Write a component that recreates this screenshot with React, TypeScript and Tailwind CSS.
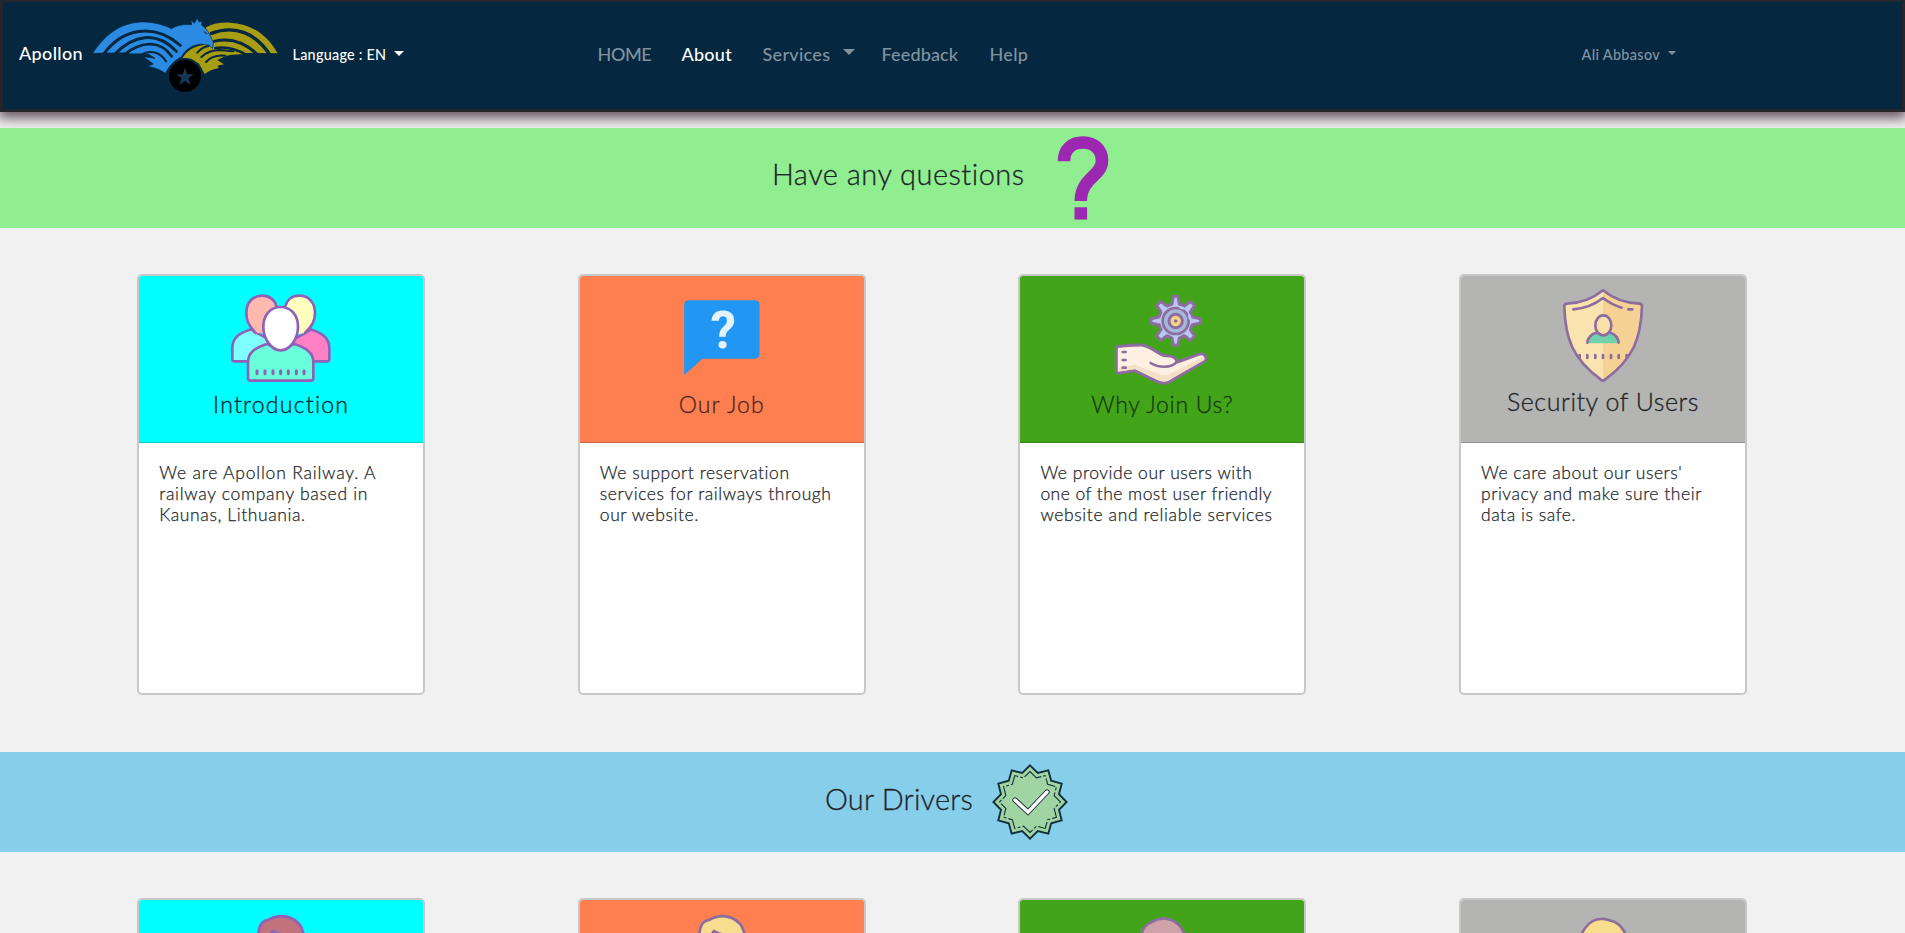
import React from 'react';

function Caret({ className }: { className: string }) {
  return <span className={`inline-block border-x-transparent border-b-0 ${className}`} />;
}

function Logo() {
  return (
    <svg className="block h-[82px] w-[190px]" viewBox="273 42 570 246">
      <path fill="#a79d12" d="M618 82C640 70 665 67 690 68C752 70 802 104 833 160L640 158C680 150 712 155 732 163C712 162 690 164 672 170L652 180L672 193L652 197L657 204C640 207 625 213 614 222L596 190L546 178C556 156 580 138 610 136Z" />
      <g fill="none" stroke="#05273f" strokeLinecap="round">
        <path strokeWidth="10" d="M812 168C768 98 704 74 634 100" />
        <path strokeWidth="9" d="M776 167C735 126 690 112 642 124" />
        <path strokeWidth="8" d="M742 166C712 148 682 138 646 144" />
        <path strokeWidth="6" d="M592 158C600 148 612 140 626 138M604 171C620 156 638 150 660 150L700 154M618 186C632 170 650 164 676 167" />
      </g>
      <path fill="#2b8be3" stroke="#05273f" strokeWidth="2" d="M278 160C320 96 370 66 430 66C468 66 498 78 515 86C530 75 555 72 575 74L573 60L583 70L592 54L597 66L606 64L605 76C616 82 623 92 629 104L640 126L638 146L628 136C598 126 560 138 545 170C525 180 508 196 496 220C478 208 462 202 442 199L460 192L430 170L465 175L445 162L382 161L388 158Z" />
      <g fill="none" stroke="#05273f" strokeLinecap="round">
        <path strokeWidth="9" d="M310 164C365 86 460 66 541 136" />
        <path strokeWidth="9" d="M343 164C400 104 470 92 529 154" />
        <path strokeWidth="8" d="M374 163C425 122 482 120 515 169" />
        <path strokeWidth="6" d="M425 163C455 148 482 158 498 184" />
        <path strokeWidth="3" d="M612 96l9 5" />
      </g>
      <circle cx="555" cy="228" r="54" fill="#05273f" />
      <circle cx="555" cy="228" r="48" fill="#000" />
      <path fill="#163656" d="M555 204l6.500 19h20l-16 12 6 20-16.500-12-16.500 12 6-20-16-12h20z" />
    </svg>
  );
}

function QuestionIcon() {
  return (
    <svg className="block h-[100px] w-[60px]" viewBox="0 0 60 100" fill="none" stroke="#9c27b0">
      <path strokeWidth="12.600" d="M11 33.300C11 21 19 14.500 30 14.500C41 14.500 49 21.500 49 33C49 48 27.800 50 27.800 73" />
      <path strokeWidth="12.300" d="M21.500 85.400h12.600" />
    </svg>
  );
}

function badgePoints(outer: number, inner: number) {
  return Array.from({ length: 24 }, (_, i) => {
    const r = i % 2 ? inner : outer;
    const a = (i * Math.PI) / 12 - Math.PI / 2;
    return `${(38 + r * Math.cos(a)).toFixed(2)},${(38 + r * Math.sin(a)).toFixed(2)}`;
  }).join(' ');
}

function BadgeIcon() {
  return (
    <svg className="block size-[76px]" viewBox="0 0 76 76" fill="none" strokeLinejoin="miter">
      <polygon points={badgePoints(36.6, 30)} fill="#a0d4a3" stroke="#12303b" strokeWidth="1.900" />
      <polygon points={badgePoints(30.5, 25)} stroke="#12303b" strokeWidth="1.100" strokeDasharray="14 2 3 2" />
      <path d="M23 36l13 12l19-20" stroke="#12303b" strokeWidth="5.200" strokeLinecap="round" />
      <path d="M23 36l13 12l19-20" stroke="#fff" strokeWidth="3.400" strokeLinecap="round" />
    </svg>
  );
}

const iconBox = 'block h-[110px] w-[100px] shrink-0';

function PeopleIcon() {
  return (
    <svg className={iconBox} viewBox="304 33 300 330" stroke="#9160b8" strokeWidth="8" strokeLinejoin="round" strokeLinecap="round">
      <path fill="#80ffff" d="M365 193C325 205 308 220 308 250V283Q308 289 314 289H400L430 230L375 200Z" />
      <path fill="#ff80c5" d="M542 193C580 205 599 220 599 250V283Q599 289 593 289H510L480 230L525 205Z" />
      <path fill="#ffb9ae" stroke="none" d="M378 204C355 180 350 165 350 143C350 112 370 92 398 92C420 92 436 105 442 125L405 205Z" />
      <path fill="none" d="M378 204C355 180 350 165 350 143C350 112 370 92 398 92C420 92 436 105 440 123" />
      <path fill="#ffffbf" stroke="none" d="M526 204C550 180 556 165 556 143C556 112 536 92 509 92C487 92 470 105 466 125L505 207Z" />
      <path fill="none" d="M526 204C550 180 556 165 556 143C556 112 536 92 509 92C487 92 472 105 467 123" />
      <path fill="#69ffdb" d="M412 237C375 249 355 262 355 292V339Q355 347 363 347H544Q551 347 551 339V292C551 262 530 249 494 237L453 255Z" />
      <path fill="#fff" d="M453 126C483 126 505 150 505 185C505 220 482 256 453 256C424 256 401 220 401 185C401 150 423 126 453 126Z" />
      <path strokeWidth="9" d="M382 317v9M406 317v9M430 317v9M453 317v9M476 317v9M500 317v9M523 317v9" />
    </svg>
  );
}

function ChatIcon() {
  return (
    <svg className={iconBox} viewBox="306.5 33 300 330">
      <path fill="#2196f3" d="M357 106H555Q569 106 569 120V267Q569 281 555 281H398L343 330V120Q343 106 357 106Z" />
      <text x="460" y="249" textAnchor="middle" fill="#e3f2fd" fontFamily="Roboto, sans-serif" fontWeight="700" fontSize="154">?</text>
    </svg>
  );
}

function HandGearIcon() {
  return (
    <svg className={iconBox} viewBox="307 33 300 330" strokeLinejoin="round" strokeLinecap="round">
      <g stroke="#8d6c9f" strokeWidth="9">
        <path fill="#b9c8ef" d="M491 94H505L509 117L524 123L543 109L555 121L542 141L548 156L573 161V175L548 179L542 194L555 213L543 226L524 212L509 219L505 241H491L487 219L472 212L453 226L441 213L454 194L448 179L424 175V161L448 156L454 141L441 121L453 109L472 123L487 117Z" />
        <circle cx="498" cy="168" r="39" fill="#a5b8dc" strokeWidth="8" />
        <circle cx="498" cy="168" r="20" fill="#fad383" strokeWidth="9" />
        <path fill="none" stroke="#b9c8ef" strokeWidth="8" d="M512 127l7 3M539 152l2 8" />
        <circle cx="498" cy="168" r="3" fill="#8d6c9f" strokeWidth="5" />
        <path fill="#fdf0e2" d="M320 251Q320 245 327 244C350 242 375 239 397 240C430 246 445 270 466 272C486 271 500 276 503 291L567 268C584 262 597 280 582 290L490 344C475 356 460 358 443 350L375 317L327 324Q320 324 320 318Z" />
      </g>
      <path fill="#f4dfc7" d="M326 309L376 299L447 327C460 332 475 330 487 323L578 277C590 280 585 285 578 289L489 339C475 350 462 352 446 345L376 312L326 320Z" />
      <path fill="none" stroke="#8d6c9f" strokeWidth="8" d="M423 294C443 307 485 313 503 288M339 261h9M339 285h9M339 308h9" />
    </svg>
  );
}

function ShieldIcon() {
  return (
    <svg className={iconBox} viewBox="309 33 300 330" strokeLinejoin="round" strokeLinecap="round">
      <path fill="#f9e3ae" d="M459 76C425 105 385 115 343 117C340 215 362 280 459 347Z" />
      <path fill="#f5d294" d="M459 76C493 105 533 115 576 117C578 215 556 280 459 347Z" />
      <path fill="#70d1ac" d="M413 235C416 215 428 205 442 204L476 204C492 205 503 217 506 235Z" />
      <g fill="none" stroke="#8d6c9f" strokeWidth="8">
        <path d="M459 76C425 104 387 115 350 116Q343 117 343 124C345 220 368 282 453 344Q459 349 465 344C550 282 573 220 576 124Q576 117 569 116C532 115 493 104 459 76Z" />
        <path d="M370 133C405 130 435 118 459 99C477 113 495 122 515 128M535 133h12" />
        <path d="M412 233C414 215 424 207 439 203M506 233C504 215 494 207 480 203" />
        <ellipse cx="460" cy="181" rx="24" ry="30" fill="#f9dfa8" />
        <path d="M389 270v9M412 270v9M436 270v9M459 270v9M483 270v9M506 270v9M530 270v9" />
      </g>
    </svg>
  );
}

function Hair({ fill, stroke, d, lock }: { fill: string; stroke: string; d: string; lock?: string }) {
  return (
    <svg className={iconBox} viewBox="0 0 100 110" stroke={stroke} strokeWidth="2.700" strokeLinecap="round" strokeLinejoin="round">
      <path fill={fill} d={d} />
      {lock && <path fill="#fff" d={lock} />}
    </svg>
  );
}

const hairShort = 'M29 48C25 30 29 21 37 20C52 12 70 17 73 36L74 50';
const hairLock = 'M37 48C37 38 39 35 42 31C48 35 60 36 67 36V50';
const hairLong = 'M29 48C27 33 32 25 40 22C53 14 68 20 73 36L74 50';
const hairRound = 'M25 50C26 32 36 19 48 19C53 18 56 21 59 21C69 24 75 35 76 50';

type CardProps = {
  header: string;
  icon: React.ReactNode;
  title?: string;
  titleClass?: string;
  lines?: { text: string; cls: string }[];
};

function Card({ header, icon, title, titleClass, lines = [] }: CardProps) {
  return (
    <article className="h-[421px] w-72 overflow-hidden rounded-[5px] border-2 border-[#c8c8c8] bg-white">
      <div className={`flex h-[167px] flex-col items-center border-b border-black/20 ${header}`}>
        {icon}
        {title && <h2 className={`font-light whitespace-nowrap [-webkit-text-stroke:0.3px] ${titleClass}`}>{title}</h2>}
      </div>
      <div className="pt-[19px] pl-5 text-[17.500px] leading-[21px] font-light text-[#212529] [-webkit-text-stroke:0.25px]">
        {lines.map((l) => (
          <p key={l.text} className={`whitespace-nowrap ${l.cls}`}>
            {l.text}
          </p>
        ))}
      </div>
    </article>
  );
}

const topCards: CardProps[] = [
  {
    header: 'bg-[#00ffff]',
    icon: <PeopleIcon />,
    title: 'Introduction',
    titleClass: 'mt-[2px] text-[23px] leading-8 text-[#04202b] tracking-[1.250px]',
    lines: [
      { text: 'We are Apollon Railway. A', cls: 'tracking-[0.800px]' },
      { text: 'railway company based in', cls: 'tracking-[0.700px]' },
      { text: 'Kaunas, Lithuania.', cls: 'tracking-[0.600px]' },
    ],
  },
  {
    header: 'bg-[#ff7f50]',
    icon: <ChatIcon />,
    title: 'Our Job',
    titleClass: 'mt-[2px] text-[23px] leading-8 text-[#4b2a20] tracking-[1.100px]',
    lines: [
      { text: 'We support reservation', cls: 'tracking-[0.550px]' },
      { text: 'services for railways through', cls: 'tracking-[0.590px]' },
      { text: 'our website.', cls: 'tracking-[0.580px]' },
    ],
  },
  {
    header: 'bg-[#42a418]',
    icon: <HandGearIcon />,
    title: 'Why Join Us?',
    titleClass: 'mt-[2px] text-[23px] leading-8 text-[#193a10] tracking-[0.700px]',
    lines: [
      { text: 'We provide our users with', cls: 'tracking-[0.530px]' },
      { text: 'one of the most user friendly', cls: 'tracking-[0.450px]' },
      { text: 'website and reliable services', cls: 'tracking-[0.620px]' },
    ],
  },
  {
    header: 'bg-[#b4b4b2]',
    icon: <ShieldIcon />,
    title: 'Security of Users',
    titleClass: '-mt-[1px] text-[25px] leading-8 text-[#212529] tracking-[0.550px]',
    lines: [
      { text: "We care about our users'", cls: 'tracking-[0.530px]' },
      { text: 'privacy and make sure their', cls: 'tracking-[0.540px]' },
      { text: 'data is safe.', cls: 'tracking-[0.560px]' },
    ],
  },
];

const driverCards: CardProps[] = [
  { header: 'bg-[#00ffff]', icon: <Hair fill="#c0737c" stroke="#9160b8" d={hairShort} lock={hairLock} /> },
  { header: 'bg-[#ff7f50]', icon: <Hair fill="#f9dd8f" stroke="#8d6c9f" d={hairShort} lock={hairLock} /> },
  { header: 'bg-[#42a418]', icon: <Hair fill="#cfa2a7" stroke="#8d6c9f" d={hairLong} /> },
  { header: 'bg-[#b4b4b2]', icon: <Hair fill="#f9dd8f" stroke="#8d6c9f" d={hairRound} /> },
];

function CardRow({ cards }: { cards: CardProps[] }) {
  return (
    <div className="flex gap-[152.600px] pt-[46px] pl-[137.200px]">
      {cards.map((c, i) => (
        <Card key={i} {...c} />
      ))}
    </div>
  );
}

export default function App() {
  return (
    <div className="h-[933px] overflow-hidden bg-[#f1f1f1] font-['Lato','Open_Sans',sans-serif]">
      <nav className="relative flex h-28 items-start border-[3px] border-t-2 border-[#23272c] bg-[#05273f] text-[18px] font-medium whitespace-nowrap text-[#8293a0] shadow-[0_4px_12px_2px_rgba(50,30,42,0.75)]">
        <span className="mt-[37px] ml-4 w-[72px] leading-7 tracking-[0.350px] text-white">Apollon</span>
        <div className="mt-[12px]">
          <Logo />
        </div>
        <button className="mt-[41px] ml-[11.500px] flex w-[305px] items-center text-[14.400px] leading-6 tracking-[0.250px] text-white">
          <span className="w-[101px] text-left">Language : EN</span>
          <Caret className="-mt-[3px] border-x-[5px] border-t-[5px]" />
        </button>
        <div className="mt-[38px] flex leading-7">
          <a className="w-[84px] tracking-[-0.400px]">HOME</a>
          <a className="w-[81px] tracking-[0.250px] text-white">About</a>
          <a className="flex w-[119px] items-center">
            <span className="w-[80px] tracking-[0.300px]">Services</span>
            <Caret className="-mt-[4px] border-x-[6px] border-t-[6px]" />
          </a>
          <a className="w-[108px] tracking-[0.150px]">Feedback</a>
          <a className="w-[592px] tracking-[0.300px]">Help</a>
        </div>
        <button className="mt-[41px] flex items-center text-[14.400px] leading-6 tracking-[0.350px]">
          <span className="w-[86px] text-left">Ali Abbasov</span>
          <Caret className="-mt-[4px] border-x-[4px] border-t-[4px]" />
        </button>
      </nav>
      <section className="relative mt-4 flex h-[100px] items-start bg-[#90ee90] pl-[772px] text-[29px] font-light text-[#212529] [-webkit-text-stroke:0.3px]">
        <h1 className="mt-[23px] w-[281px] leading-[46px] tracking-[0.480px] whitespace-nowrap">Have any questions</h1>
        <QuestionIcon />
      </section>
      <CardRow cards={topCards} />
      <section className="mt-[57px] flex h-[100px] items-start bg-[#87ceeb] pl-[825px] text-[29px] font-light text-[#212529] [-webkit-text-stroke:0.3px]">
        <h1 className="mt-[24px] w-[167px] leading-[46px] tracking-[0.150px] whitespace-nowrap">Our Drivers</h1>
        <div className="mt-3">
          <BadgeIcon />
        </div>
      </section>
      <CardRow cards={driverCards} />
    </div>
  );
}
